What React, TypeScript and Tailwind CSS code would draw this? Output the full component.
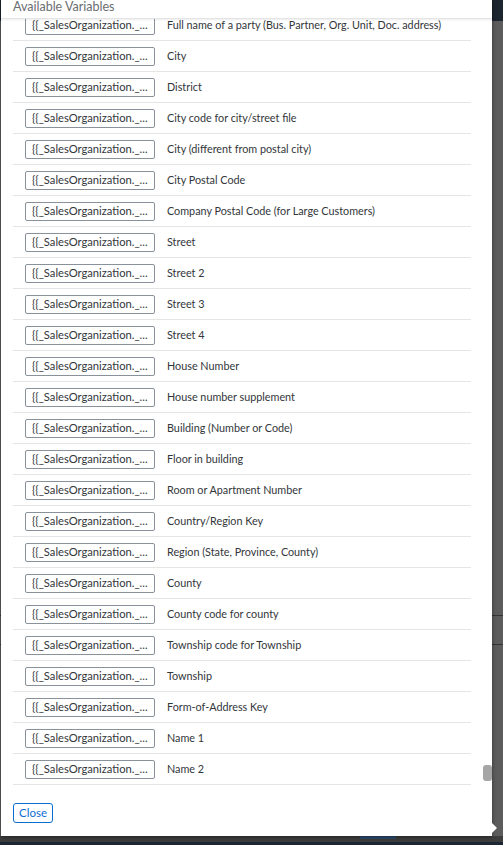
const rows = [
  'Full name of a party (Bus. Partner, Org. Unit, Doc. address)',
  'City',
  'District',
  'City code for city/street file',
  'City (different from postal city)',
  'City Postal Code',
  'Company Postal Code (for Large Customers)',
  'Street',
  'Street 2',
  'Street 3',
  'Street 4',
  'House Number',
  'House number supplement',
  'Building (Number or Code)',
  'Floor in building',
  'Room or Apartment Number',
  'Country/Region Key',
  'Region (State, Province, County)',
  'County',
  'County code for county',
  'Township code for Township',
  'Township',
  'Form-of-Address Key',
  'Name 1',
  'Name 2',
]

function VariableRow({ label }: { label: string }) {
  return (
    <div className="h-[31px] flex items-center border-b border-[#e5e5e5] pl-[12px] gap-[12px]">
      <button className="w-[130px] h-[19px] shrink-0 border border-[#89919a] bg-white rounded-[2px] text-left pl-[6px] text-[11.2px] leading-none text-[#32363a] overflow-hidden whitespace-nowrap">
        {'{{_SalesOrganization._...'}
      </button>
      <span className="text-[10.8px] text-[#32363a] whitespace-nowrap">{label}</span>
    </div>
  )
}

export default function App() {
  return (
    <div
      className="relative w-[503px] h-[845px] overflow-hidden bg-[#5c5c5c] flex flex-col"
      style={{ fontFamily: 'Lato, "Liberation Sans", sans-serif' }}
    >
      {/* page behind the popover */}
      <div className="h-[21px] bg-[#1b2530]" />
      <div className="flex-1 flex flex-col">
        <div className="h-[595px] border-b border-[#333]" />
        <div className="h-[29px] border-b border-[#333]" />
        <div className="flex-1" />
      </div>
      <div className="h-[6px] bg-[#3d3d3d] flex">
        <div className="ml-[360px] w-[36px] h-[3px] bg-[#2b4a6b]" />
      </div>
      <div className="h-[3px] bg-[#1c2733]" />

      {/* popover */}
      <div className="absolute left-[1px] top-0 w-[491px] h-[836px] bg-white shadow-[0_1px_4px_rgba(0,0,0,0.45)] flex flex-col">
        <div className="relative z-10 h-[19px] shrink-0 px-[12px] bg-white border-b border-[#e4e4e4] shadow-[0_1px_2px_rgba(0,0,0,0.08)]">
          <div className="text-[12.5px] leading-[13px] text-[#6a6d70]">Available Variables</div>
        </div>
        <div className="relative h-[773px] shrink-0 overflow-hidden">
          <div className="-mt-[9px] ml-[12px] w-[458px]">
            {rows.map((r) => (
              <VariableRow key={r} label={r} />
            ))}
          </div>
          <div className="absolute right-0 top-[746px] w-[9px] h-[16px] rounded-[3px] bg-[#a6a6a6]" />
        </div>
        <div className="pt-[7px] px-[12px]">
          <button className="h-[20px] px-[5px] border border-[#0a6ed1] rounded-[3px] text-[11.5px] leading-none text-[#0a6ed1] bg-white">
            Close
          </button>
        </div>
        <div className="absolute -right-[5px] bottom-[2px] w-0 h-0 border-y-[6px] border-y-transparent border-l-[6px] border-l-white" />
      </div>
    </div>
  )
}
